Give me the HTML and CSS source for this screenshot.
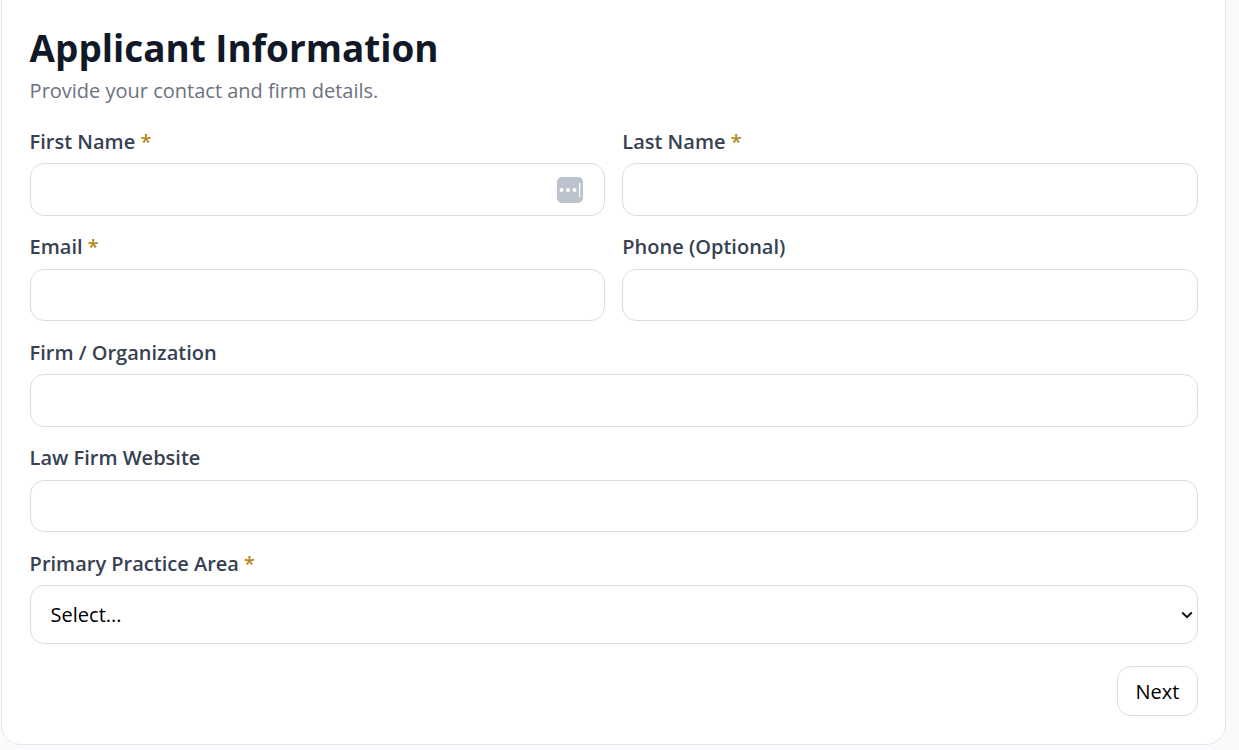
FILE: index.html
```html
<!DOCTYPE html>
<html lang="en">
<head>
<meta charset="utf-8">
<title>Applicant Information</title>
<link rel="stylesheet" href="styles.css">
</head>
<body>
<main class="card">
  <h1 class="title">Applicant Information</h1>
  <p class="subtitle">Provide your contact and firm details.</p>
  <form class="form">
    <div class="grid">
      <div class="field">
        <label class="label">First Name <span class="req">*</span></label>
        <div class="input-wrap">
          <input class="input" type="text">
          <svg class="key-icon" width="26" height="26" viewBox="0 0 26 26" aria-hidden="true">
            <rect width="26" height="26" rx="5" fill="#bcc2ce"/>
            <circle cx="4.5" cy="13" r="2" fill="#fff"/>
            <circle cx="11" cy="13" r="2" fill="#fff"/>
            <circle cx="17.5" cy="13" r="2" fill="#fff"/>
            <rect x="22" y="6" width="1.2" height="14" fill="#fff"/>
          </svg>
        </div>
      </div>
      <div class="field">
        <label class="label">Last Name <span class="req">*</span></label>
        <input class="input" type="text">
      </div>
      <div class="field">
        <label class="label">Email <span class="req">*</span></label>
        <input class="input" type="email">
      </div>
      <div class="field">
        <label class="label">Phone (Optional)</label>
        <input class="input" type="tel">
      </div>
      <div class="field wide">
        <label class="label">Firm / Organization</label>
        <input class="input" type="text">
      </div>
      <div class="field wide">
        <label class="label">Law Firm Website</label>
        <input class="input" type="text">
      </div>
      <div class="field wide">
        <label class="label">Primary Practice Area <span class="req">*</span></label>
        <div class="input-wrap">
          <select class="input select"><option>Select...</option></select>
          <svg class="chevron" width="12" height="8" viewBox="0 0 12 8" aria-hidden="true">
            <path d="M1.2 1.5 6 6.2l4.8-4.7" fill="none" stroke="#111" stroke-width="2"/>
          </svg>
        </div>
      </div>
    </div>
    <div class="actions"><button class="next" type="button">Next</button></div>
  </form>
</main>
</body>
</html>
```
FILE: styles.css
```css
* { box-sizing: border-box; }
html, body { margin: 0; height: 750px; overflow: hidden; }
body {
  background: #f9fafb;
  font-family: "Open Sans", "Noto Sans", sans-serif;
  color: #111827;
  padding-left: 1px;
}
.card {
  width: 1225px;
  height: 765px;
  margin-top: -20px;
  padding: 44px 27px 28px 27.6px;
  background: #fff;
  border: 1px solid #e5e7eb;
  border-radius: 20px;
}
.title {
  margin: 0;
  font-size: 36.9px;
  line-height: 46px;
  font-weight: 700;
  color: #111827;
}
.subtitle {
  margin: 6px 0 0;
  font-size: 20px;
  line-height: 28px;
  color: #6b7280;
}
.form { margin-top: 22.5px; }
.grid {
  display: grid;
  grid-template-columns: 1fr 1fr;
  column-gap: 17px;
  row-gap: 17.5px;
}
.wide { grid-column: 1 / -1; }
.field { display: flex; flex-direction: column; gap: 7.5px; min-width: 0; }
.label {
  font-size: 20px;
  line-height: 28px;
  font-weight: 600;
  color: #374151;
}
.req { color: #b7861c; }
.input-wrap { position: relative; display: flex; }
.input {
  width: 100%;
  height: 52.6px;
  padding: 0 20px;
  background: #fff;
  border: 1px solid #d9dee6;
  border-radius: 14px;
  font: inherit;
  font-size: 20px;
  color: #000;
}
.select { height: 59px; appearance: none; }
.key-icon { position: absolute; right: 22.5px; top: 14px; }
.chevron { position: absolute; right: 5px; top: 26px; }
.actions { display: flex; justify-content: flex-end; margin-top: 22px; }
.next {
  width: 81px;
  height: 49.8px;
  background: #fff;
  border: 1px solid #d9dee6;
  border-radius: 14px;
  font: inherit;
  font-size: 20px;
  color: #000;
}
```
